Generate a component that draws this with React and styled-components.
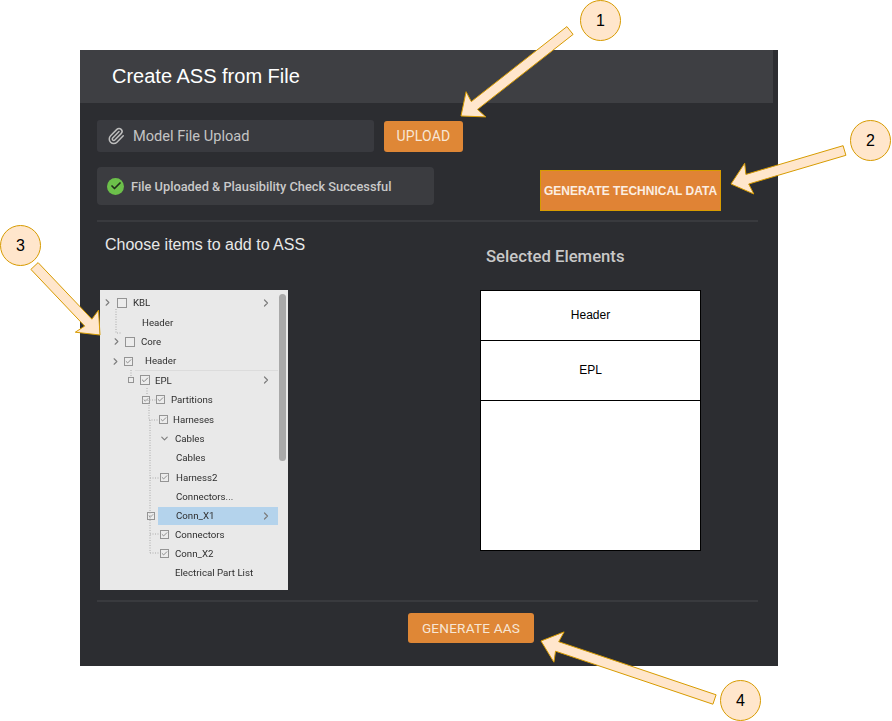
import React from 'react';
import styled, { createGlobalStyle } from 'styled-components';
import { Paperclip, Check, ChevronRight, ChevronDown } from 'lucide-react';

const GlobalStyle = createGlobalStyle`
	html, body {
		margin: 0;
		background: #fff;
	}
`;

const Page = styled.div`
	position: relative;
	box-sizing: border-box;
	width: 892px;
	height: 721px;
	padding: 50px 0 0 80px;
	overflow: hidden;
	font-family: 'Liberation Sans', Arial, sans-serif;
`;

const Panel = styled.section`
	display: flex;
	flex-direction: column;
	width: 698px;
	height: 616px;
	background: #2c2d31;
`;

const Header = styled.header`
	display: flex;
	align-items: center;
	flex: 0 0 53px;
	margin-right: 5px;
	padding-left: 32px;
	background: #3e3f43;
	color: #fff;
	font-size: 20px;
`;

const Body = styled.div`
	display: flex;
	flex-direction: column;
	padding: 17px 20px 0 17px;
`;

const UploadRow = styled.div`
	display: flex;
	align-items: center;
	gap: 10px;
	height: 32px;
`;

const Field = styled.div`
	display: flex;
	align-items: center;
	gap: 8px;
	box-sizing: border-box;
	width: 277px;
	height: 32px;
	padding-left: 10px;
	border-radius: 3px;
	background: #393a3f;
	color: #c4c4c4;
	font-family: Roboto, sans-serif;
	font-size: 14.6px;
`;

const OrangeButton = styled.button`
	box-sizing: border-box;
	width: ${p => p.$w}px;
	height: ${p => p.$h}px;
	padding: 0;
	border: none;
	border-radius: 3px;
	background: #df8736;
	color: #f7e6d5;
	font-family: Roboto, sans-serif;
	font-size: ${p => p.$size}px;
	font-weight: 400;
	letter-spacing: 0.2px;
`;

const StatusRow = styled.div`
	display: flex;
	align-items: flex-start;
	height: 44px;
	margin-top: 15px;
`;

const Status = styled.div`
	display: flex;
	align-items: center;
	gap: 7px;
	box-sizing: border-box;
	width: 337px;
	height: 38px;
	padding-left: 10px;
	border-radius: 4px;
	background: #3b3c40;
	color: #c9c9c9;
	font-family: Roboto, sans-serif;
	font-size: 12.8px;
	font-weight: 500;
`;

const GreenTick = styled.span`
	display: flex;
	align-items: center;
	justify-content: center;
	width: 17px;
	height: 17px;
	border-radius: 50%;
	background: #6cc04a;
	color: #22301c;
`;

const TechButton = styled.button`
	box-sizing: border-box;
	width: 181px;
	height: 41px;
	margin: 3px 0 0 106px;
	padding: 0;
	border: 1px solid #d79b00;
	background: #e08335;
	color: #fbeee2;
	font-family: 'Liberation Sans', Arial, sans-serif;
	font-size: 12px;
	font-weight: 700;
`;

const Divider = styled.hr`
	width: 661px;
	height: 2px;
	margin: ${p => p.$top}px 0 0;
	border: none;
	background: #393a3e;
`;

const Columns = styled.div`
	display: flex;
	height: 378px;
`;

const LeftColumn = styled.div`
	display: flex;
	flex-direction: column;
	width: 380px;
	padding-left: 3px;
`;

const ChooseTitle = styled.h2`
	margin: 13px 0 35px 5px;
	color: #e8e8e8;
	font-size: 16px;
	font-weight: 400;
	line-height: 20px;
`;

const Tree = styled.div`
	position: relative;
	box-sizing: border-box;
	width: 188px;
	height: 300px;
	padding-top: 3.3px;
	background: #e9e9e9;
	color: #2e2e2e;
	font-family: Roboto, sans-serif;
	font-size: 9.7px;
	filter: blur(0.3px);
`;

const Row = styled.div`
	display: flex;
	align-items: stretch;
	height: ${p => (p.$tight ? 18.7 : 19.36)}px;
`;

const Lead = styled.div`
	display: flex;
	flex: 0 0 ${p => p.$w}px;
	align-items: center;
	justify-content: flex-end;
	gap: ${p => p.$gap}px;
	box-sizing: border-box;
	padding-right: ${p => p.$pad}px;
`;

const RowBody = styled.div`
	display: flex;
	flex: 1;
	align-items: center;
	justify-content: space-between;
	margin: ${p => (p.$selected ? '1px' : '0')} 10px ${p => (p.$selected ? '1px' : '0')} 0;
	padding: 0 6px 0 ${p => p.$pad || 0}px;
	background: ${p => (p.$selected ? '#b4d3ec' : 'transparent')};
	border-bottom: ${p => (p.$underline ? '1px solid #dcdcdc' : 'none')};
`;

const Box = styled.span`
	display: flex;
	flex: none;
	align-items: center;
	justify-content: center;
	box-sizing: border-box;
	width: ${p => p.$size}px;
	height: ${p => p.$size}px;
	border: 1px solid #949494;
	background: #ececec;
	color: #666;
`;

const Scrollbar = styled.div`
	position: absolute;
	top: 4px;
	right: 2px;
	width: 7px;
	height: 167px;
	border-radius: 4px;
	background: #a9a9a9;
`;

const TreeLines = styled.svg`
	position: absolute;
	top: 0;
	left: 0;
	pointer-events: none;
`;

const RightColumn = styled.div`
	display: flex;
	flex-direction: column;
`;

const SelectedTitle = styled.h2`
	margin: 25px 0 23px 6px;
	color: #c8c8c8;
	font-family: Roboto, sans-serif;
	font-size: 16.7px;
	font-weight: 500;
	line-height: 20px;
`;

const SelectedTable = styled.div`
	display: flex;
	flex-direction: column;
	box-sizing: border-box;
	width: 221px;
	height: 261px;
	border: 1px solid #000;
	background: #fff;
	color: #000;
	font-size: 12px;
`;

const SelectedRow = styled.div`
	display: flex;
	align-items: ${p => (p.$top ? 'flex-start' : 'center')};
	justify-content: center;
	box-sizing: border-box;
	flex: 0 0 ${p => p.$h}px;
	padding: ${p => (p.$top ? '22px 0 0' : '0 0 2px')};
	border-bottom: 1px solid #000;
`;

const Footer = styled.div`
	display: flex;
	padding: 11px 0 0 311px;
`;

const Overlay = styled.svg`
	position: absolute;
	top: 0;
	left: 0;
	pointer-events: none;
`;

const Callout = styled.div`
	position: absolute;
	left: ${p => p.$x - 20}px;
	top: ${p => p.$y - 20}px;
	display: flex;
	align-items: center;
	justify-content: center;
	box-sizing: border-box;
	width: 41px;
	height: 41px;
	border: 1px solid #d79b00;
	border-radius: 50%;
	background: #ffe6cc;
	color: #000;
	font-size: 16px;
`;

const treeRows = [
	{ label: 'KBL', w: 33, pad: 6, gap: 4, lead: [['chev', 10], ['box', 10]], more: true },
	{ label: 'Header', w: 42 },
	{ label: 'Core', w: 41, pad: 6, gap: 3, lead: [['chev', 10], ['box', 10]] },
	{ label: 'Header', w: 35, pad: 2, gap: 3, lead: [['chev', 10], ['tick', 9]], bodyPad: 10, underline: true },
	{ label: 'EPL', w: 55, pad: 5, gap: 6, lead: [['box', 6], ['tick', 10]], more: true },
	{ label: 'Partitions', w: 71, pad: 6, gap: 6, lead: [['tick', 8], ['tick', 9]] },
	{ label: 'Harneses', w: 73, pad: 5, lead: [['tick', 9]] },
	{ label: 'Cables', w: 75, pad: 5, lead: [['down', 10]] },
	{ label: 'Cables', w: 76 },
	{ label: 'Harness2', w: 76, pad: 7, lead: [['tick', 9]] },
	{ label: 'Connectors...', w: 76 },
	{ label: 'Conn_X1', w: 58, pad: 3, lead: [['tick', 8]], bodyPad: 18, more: true, selected: true },
	{ label: 'Connectors', w: 75, pad: 6, lead: [['tick', 9]], tight: true },
	{ label: 'Conn_X2', w: 75, pad: 6, lead: [['tick', 9]], tight: true },
	{ label: 'Electrical Part List', w: 75, tight: true },
];

const LeadItem = ({ kind, size }) => {
	if (kind === 'chev') return <ChevronRight size={size + 1} color="#7d7d7d" strokeWidth={2.4} />;
	if (kind === 'down') return <ChevronDown size={size + 1} color="#7d7d7d" strokeWidth={2.4} />;
	if (kind === 'tick') {
		return (
			<Box $size={size}>
				<Check size={size - 2} strokeWidth={2.4} />
			</Box>
		);
	}
	return <Box $size={size} />;
};

// tail centre, tip, head corners come from the reference
const arrowPoints = (tail, tip, shaft, headW, headL, neck) => {
	const dx = tip[0] - tail[0];
	const dy = tip[1] - tail[1];
	const len = Math.hypot(dx, dy);
	const ux = dx / len;
	const uy = dy / len;
	const nx = -uy;
	const ny = ux;
	const at = (along, side) => [tail[0] + ux * along + nx * side, tail[1] + uy * along + ny * side];
	return [
		at(0, shaft / 2),
		at(len - neck, shaft / 2),
		at(len - headL, headW / 2),
		tip,
		at(len - headL, -headW / 2),
		at(len - neck, -shaft / 2),
		at(0, -shaft / 2),
	]
		.map(p => p.map(v => v.toFixed(1)).join(','))
		.join(' ');
};

const arrows = [
	{ tail: [570, 30.5], tip: [461, 116] },
	{ tail: [844.5, 150.5], tip: [731, 184] },
	{ tail: [34.5, 266], tip: [100, 335] },
	{ tail: [714.5, 699.5], tip: [541, 641] },
];

const callouts = [
	{ n: 1, x: 600, y: 20 },
	{ n: 2, x: 870, y: 140 },
	{ n: 3, x: 20, y: 245 },
	{ n: 4, x: 740, y: 700 },
];

const App = () => {
	return (
		<Page>
			<GlobalStyle />
			<Panel>
				<Header>Create ASS from File</Header>
				<Body>
					<UploadRow>
						<Field>
							<Paperclip size={18} color="#bdbdbd" strokeWidth={2} />
							Model File Upload
						</Field>
						<OrangeButton $w={79} $h={31} $size={14}>UPLOAD</OrangeButton>
					</UploadRow>
					<StatusRow>
						<Status>
							<GreenTick>
								<Check size={12} strokeWidth={3.5} />
							</GreenTick>
							File Uploaded &amp; Plausibility Check Successful
						</Status>
						<TechButton>GENERATE TECHNICAL DATA</TechButton>
					</StatusRow>
					<Divider $top={9} />
					<Columns>
						<LeftColumn>
							<ChooseTitle>Choose items to add to ASS</ChooseTitle>
							<Tree>
								<TreeLines width="188" height="300" fill="none" stroke="#aaa" strokeDasharray="1 1.5">
									<path d="M16 19V43H21" />
									<path d="M31 80V88" />
									<path d="M47 98V104" />
									<path d="M49 110V130H59" />
									<path d="M42 110H56" />
									<path d="M50 130V263" />
									<path d="M50 188H60M50 244H60M50 263H60" />
								</TreeLines>
								{treeRows.map((row, i) => (
									<Row key={i} $tight={row.tight}>
										<Lead $w={row.w} $pad={row.pad || 0} $gap={row.gap || 0}>
											{(row.lead || []).map(([kind, size], j) => (
												<LeadItem key={j} kind={kind} size={size} />
											))}
										</Lead>
										<RowBody $pad={row.bodyPad} $selected={row.selected} $underline={row.underline}>
											{row.label}
											{row.more && <ChevronRight size={12} color="#7d7d7d" strokeWidth={2.4} />}
										</RowBody>
									</Row>
								))}
								<Scrollbar />
							</Tree>
						</LeftColumn>
						<RightColumn>
							<SelectedTitle>Selected Elements</SelectedTitle>
							<SelectedTable>
								<SelectedRow $h={50}>Header</SelectedRow>
								<SelectedRow $h={60} $top>EPL</SelectedRow>
							</SelectedTable>
						</RightColumn>
					</Columns>
					<Divider $top={0} />
					<Footer>
						<OrangeButton $w={126} $h={30} $size={13.6}>GENERATE AAS</OrangeButton>
					</Footer>
				</Body>
			</Panel>
			<Overlay width="892" height="721" fill="#ffe6cc" stroke="#d79b00">
				{arrows.map((a, i) => (
					<polygon key={i} points={arrowPoints(a.tail, a.tip, 10, 32, 19, 17)} />
				))}
			</Overlay>
			{callouts.map(c => (
				<Callout key={c.n} $x={c.x} $y={c.y}>{c.n}</Callout>
			))}
		</Page>
	);
};

export default App;
